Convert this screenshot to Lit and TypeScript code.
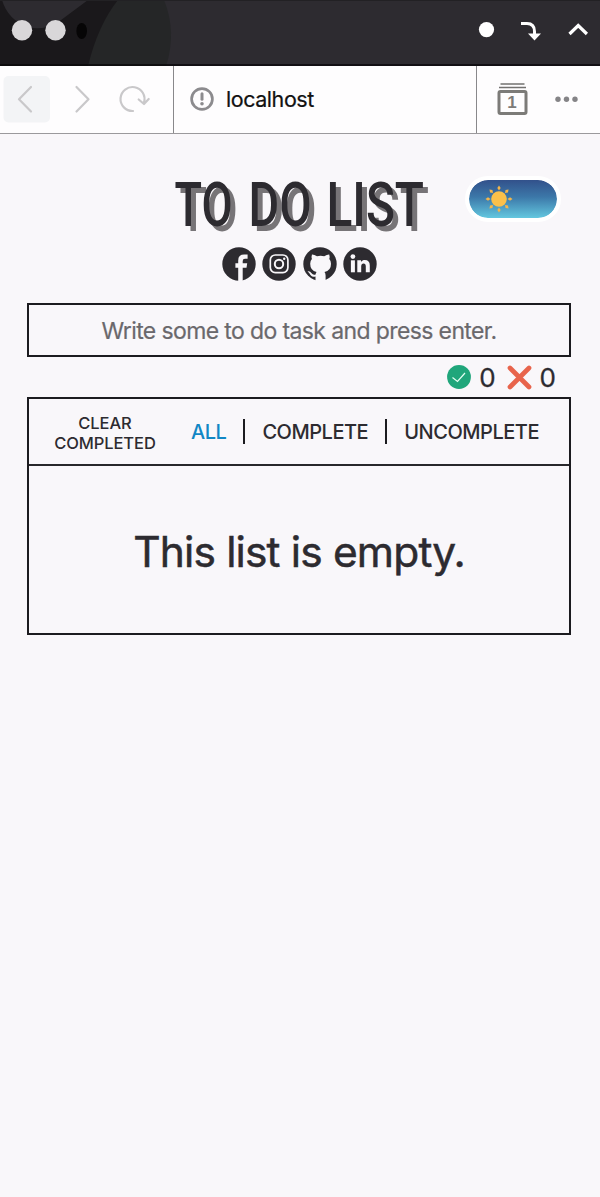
import { LitElement, html, css, svg } from "lit";
import { customElement, state } from "lit/decorators.js";

type Filter = "ALL" | "COMPLETE" | "UNCOMPLETE";

@customElement("browser-chrome")
class BrowserChrome extends LitElement {
  static styles = css`
    :host { display: block; font-family: Inter, "Liberation Sans", sans-serif; }
    svg { display: block; }
    .bar { height: 66px; background: #2d2b30; }
    .nav { display: flex; height: 67px; background: #fefdfe; border-bottom: 1.5px solid #9b999c; }
    .buttons { width: 173px; border-right: 1.5px solid #89888b; flex: none; }
    .address { flex: 1; display: flex; align-items: center; gap: 12px; padding: 0 0 2px 16px; font-size: 21.5px; letter-spacing: -0.45px; color: #111; -webkit-text-stroke: 0.2px #111; }
    .tools { width: 123px; border-left: 1.5px solid #89888b; flex: none; }
  `;
  render() {
    return html`
      <div class="bar">
        <svg width="600" height="66" viewBox="0 0 600 66">
          <path d="M0 0H118L88 66H0Z" fill="#1a181b" />
          <path d="M2 0H88L57 23Q42 31 28 27Q8 20 2 0Z" fill="#2d2b30" />
          <path d="M118 0H164Q177 32 166 66H88Q98 25 118 0Z" fill="#252627" />
          <circle cx="22" cy="30.3" r="10.2" fill="#d9d7d9" />
          <circle cx="55.5" cy="30.3" r="10.2" fill="#d9d7d9" />
          <ellipse cx="81.7" cy="31" rx="5.3" ry="8" fill="#060506" />
          <circle cx="486.5" cy="29.6" r="7.6" fill="#fff" />
          <path d="M521 23.5h6q7.5 0 7.5 8v3" fill="none" stroke="#fff" stroke-width="3" />
          <path d="M528 33.5h13l-6.5 7Z" fill="#fff" />
          <path d="M569.5 34l8.7-8.5 8.7 8.5" fill="none" stroke="#fff" stroke-width="3.2" />
          <path d="M0 .5H600" stroke="#222124" />
          <path d="M0 65H600" stroke="#08070a" stroke-width="1.5" />
        </svg>
      </div>
      <div class="nav">
        <div class="buttons">
          <svg width="173" height="67" viewBox="0 66 173 67" fill="none" stroke="#c9c8ca" stroke-width="2.2" stroke-linecap="round" stroke-linejoin="round">
            <rect x="3.5" y="76" width="46.5" height="46.5" rx="5" fill="#f3f4f6" stroke="none" />
            <path d="M31 87L19 99.2L31 111.5M76.5 87L88.5 99.2L76.5 111.5" />
            <path d="M133 111A12 12 0 1 1 144 102.5M138.7 99.5L144 104L148.7 99" />
          </svg>
        </div>
        <div class="address">
          <svg width="24" height="24" viewBox="0 0 24 24"><circle cx="12" cy="12" r="10.4" fill="none" stroke="#8c8b8e" stroke-width="2.7" /><path d="M12 6.8V12.2" stroke="#8c8b8e" stroke-width="3" stroke-linecap="round" /><circle cx="12" cy="16.7" r="1.8" fill="#8c8b8e" /></svg>
          <span>localhost</span>
        </div>
        <div class="tools">
          <svg width="122" height="67" viewBox="477 66 122 67">
            <path d="M500.5 83.9H524.5M499 87.5H526" stroke="#737270" stroke-width="1.5" />
            <rect x="499" y="91.500" width="27" height="22" rx="1.5" fill="none" stroke="#7c7b78" stroke-width="3" />
            <text x="512" y="107.8" text-anchor="middle" font-size="17" font-weight="700" font-family="Liberation Sans, sans-serif" fill="#7c7b78">1</text>
            <g fill="#858487"><circle cx="558" cy="99.3" r="2.7" /><circle cx="566.5" cy="99.3" r="2.7" /><circle cx="575" cy="99.3" r="2.7" /></g>
          </svg>
        </div>
      </div>
    `;
  }
}

@customElement("app-root")
class AppRoot extends LitElement {
  @state() private filter: Filter = "ALL";

  static styles = css`
    :host { display: block; min-height: 1197px; background: #f9f7fa; color: #2d2b30; font-family: Inter, "Liberation Sans", sans-serif; }
    * { box-sizing: border-box; }
    svg { display: block; }
    main { padding: 32px 29px 0 27px; }
    .head { display: flex; height: 81px; padding-left: 141px; justify-content: space-between; }
    .title { overflow: visible; filter: drop-shadow(5px 5px 0.5px #777477); }
    .title text { font-family: Roboto, sans-serif; font-weight: 500; fill: #2d2b30; }
    .toggle { width: 96px; height: 46px; margin: 10px 10px 0 0; border: 4px solid #fff; border-radius: 23px; background: linear-gradient(#32518b, #3c78a9 45%, #63c7df) padding-box; }
    .social { display: flex; gap: 6.5px; height: 56px; padding-left: 194.5px; }
    .entry { display: flex; align-items: center; justify-content: center; height: 54px; border: 2px solid #1c1b1f; font-size: 23px; letter-spacing: -0.62px; color: #6a686c; padding-top: 2px; -webkit-text-stroke: 0.2px #6a686c; }
    .counts { display: flex; align-items: center; justify-content: flex-end; height: 40px; padding-right: 15px; font-size: 26px; -webkit-text-stroke: 0.3px #2d2b30; }
    .counts .done { margin: 0 11px 0 8px; }
    .counts .left { margin-left: 8px; }
    .panel { border: 2px solid #1c1b1f; height: 238px; }
    .filters { display: flex; align-items: center; height: 67px; border-bottom: 2px solid #28272b; font-size: 20px; font-weight: 500; letter-spacing: -0.47px; }
    .clear { width: 104px; margin: 0 34px 0 24px; text-align: center; font-size: 16.5px; line-height: 20px; letter-spacing: -0.1px; padding-top: 2px; }
    .tab { cursor: pointer; }
    .active { color: #1187c5; }
    .rule { width: 2px; height: 25px; background: #1c1b1f; margin: 0 17px; }
    .empty { display: flex; justify-content: center; align-items: center; height: 167px; font-size: 42.5px; letter-spacing: -0.85px; padding-top: 3px; -webkit-text-stroke: 0.5px #2d2b30; }
  `;

  private tab(name: Filter) {
    return html`<span class="tab ${this.filter === name ? "active" : ""}" @click=${() => (this.filter = name)}>${name}</span>`;
  }

  private ray(angle: number) {
    return svg`<path d="M30 5.5L31.7 8L30 10.5L28.3 8Z" transform="rotate(${angle} 30 19)" />`;
  }

  render() {
    return html`
      <browser-chrome></browser-chrome>
      <main>
        <div class="head">
          <svg class="title" width="262" height="80" viewBox="168 166 262 80">
            <text x="174.5" y="226" font-size="62" textLength="58" lengthAdjust="spacingAndGlyphs">TO</text>
            <text x="248.5" y="226" font-size="62" textLength="63" lengthAdjust="spacingAndGlyphs">DO</text>
            <text x="326.5" y="226" font-size="62" textLength="97.5" lengthAdjust="spacingAndGlyphs">LIST</text>
          </svg>
          <div class="toggle">
            <svg width="60" height="38" viewBox="0 0 60 38" fill="#f5b54a">
              <circle cx="30" cy="19" r="7.8" fill="#fbc04a" />
              ${[0, 45, 90, 135, 180, 225, 270, 315].map((a) => this.ray(a))}
            </svg>
          </div>
        </div>
        <div class="social">
          <svg width="34" height="34" viewBox="0 0 34 34"><circle cx="17" cy="17" r="16.7" fill="#2d2b30" /><path d="M16.2 34V20.8H13.4V16.3H16.2V13.5Q16.2 7.6 22.2 7.6H25.6V11.8H23Q20.7 11.8 20.7 14V16.3H25.2L24.5 20.8H20.7V34Z" fill="#f9f7fa" /></svg>
          <svg width="34" height="34" viewBox="0 0 34 34"><circle cx="17" cy="17" r="16.7" fill="#2d2b30" /><rect x="8.3" y="8" width="17.6" height="17.6" rx="5" fill="none" stroke="#f9f7fa" stroke-width="1.7" /><circle cx="17" cy="17" r="4.2" fill="none" stroke="#f9f7fa" stroke-width="2" /><circle cx="22.2" cy="11.8" r="1.2" fill="#f9f7fa" /></svg>
          <svg width="34" height="34" viewBox="0 0 34 34"><circle cx="17" cy="17" r="16.7" fill="#2d2b30" /><path d="M12.5 34V29.5C8.5 30.5 7.5 28 6.4 26.2Q5.5 25 4.5 24.5Q6.8 23.7 8.6 26.3Q10 28.3 12.6 27.4Q12.8 25.9 13.6 25Q7.200 23.6 7.200 16.7Q7.200 13.8 8.900 12Q8.100 10 9 7.5Q11.2 7.4 14 9.2Q17.5 8.2 21.2 9.2Q24 7.4 26.200 7.5Q27.100 10 26.300 12Q28 13.8 28 16.7Q28 23.700 21.5 25Q22.6 26.2 22.6 28.5V34Z" fill="#f9f7fa" /></svg>
          <svg width="34" height="34" viewBox="0 0 34 34"><circle cx="17" cy="17" r="16.7" fill="#2d2b30" /><g fill="#f9f7fa"><circle cx="9.9" cy="9.600" r="2.400" /><rect x="7.900" y="13.3" width="4" height="12" /><path d="M14.3 13.3H18V15C19 13.500 20.2 13 21.8 13Q26.8 13 26.8 18.5V25.3H22.8V19.3Q22.8 16.400 20.600 16.400Q18.2 16.400 18.2 19.3V25.3H14.3Z" /></g></svg>
        </div>
        <div class="entry">Write some to do task and press enter.</div>
        <div class="counts">
          <svg width="24" height="24" viewBox="0 0 24 24"><circle cx="12" cy="12" r="11.9" fill="#20a67b" /><path d="M5.5 12.5L10.5 16.5L18 8" fill="none" stroke="#e5fff3" stroke-width="1.2" /></svg>
          <span class="done">0</span>
          <svg width="25" height="25" viewBox="0 0 25 25"><path d="M3 3L22 22M22 3L3 22" stroke="#e8644c" stroke-width="4.7" stroke-linecap="round" /></svg>
          <span class="left">0</span>
        </div>
        <div class="panel">
          <div class="filters">
            <div class="clear">CLEAR COMPLETED</div>
            ${this.tab("ALL")}<i class="rule"></i>${this.tab("COMPLETE")}<i class="rule"></i>${this.tab("UNCOMPLETE")}
          </div>
          <div class="empty">This list is empty.</div>
        </div>
      </main>
    `;
  }
}
